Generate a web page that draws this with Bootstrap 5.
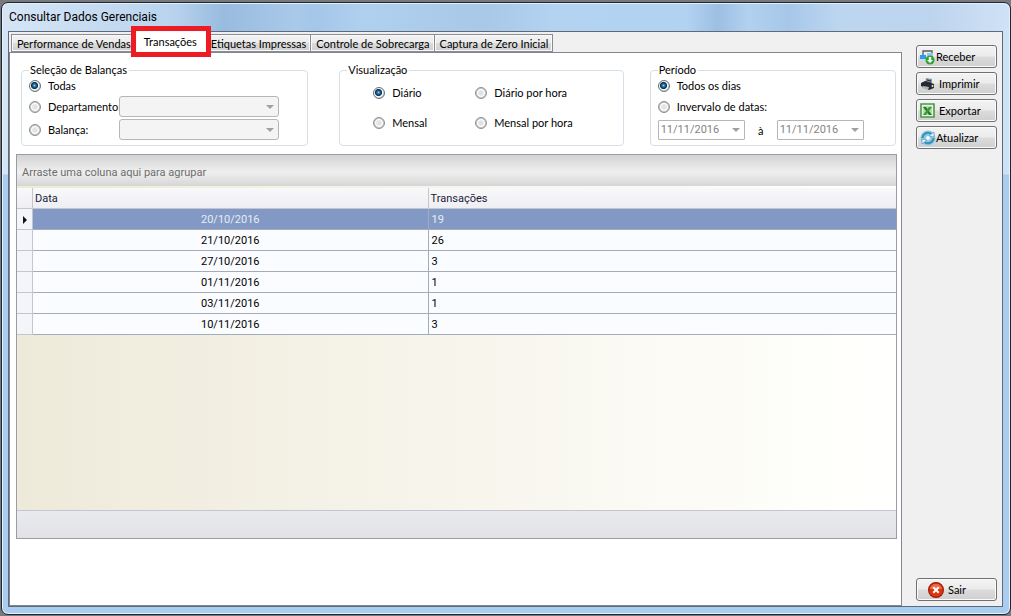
<!DOCTYPE html>
<html lang="pt-BR">
<head>
<meta charset="utf-8">
<meta name="viewport" content="width=device-width, initial-scale=1">
<title>Consultar Dados Gerenciais</title>
<link href="https://cdn.jsdelivr.net/npm/bootstrap@5.3.0/dist/css/bootstrap.min.css" rel="stylesheet">
<style>
body{font:11px/14px Lato,"Liberation Sans",sans-serif;color:#000;background:#77797c;padding:2px 0 1px 1px}
.win{border:1px solid #1d2732;border-radius:7px;padding:0 7px 7px 6px;
 background:linear-gradient(transparent 171px,#a9cdf0 172px),linear-gradient(90deg,#d5e5f6 0,#b9d3ee 17%,#98bbdf 22%,#a9c9e9 29%,#a4c6e8 31%,#b0d0ef 36%,#a9c8e8 48%,#b3d3f1 55%,#b1d2f1 68%,#9dbfe2 71%,#b2d1ef 74%,#a7c7e9 78%,#bdd6f0 83%,#bdd4ee 92%,#cfe2f6 100%);
 box-shadow:inset 0 0 0 1px #e4f1fc}
.caption{font:12px/16px Roboto,"Liberation Sans",sans-serif;height:28px;padding:6px 1px 0}
.client{border:1px solid #5d6a7c;background:#f0f0f0;min-height:0}
.tabs{padding:2px 0 0 2px;height:20px;border:0}
.tabs .nav-link{height:18px;padding:2px 4px 0 5px;border:1px solid #898c95;margin-right:-1px;border-radius:0;color:#000;white-space:nowrap;
 background:linear-gradient(#f3f3f3 0,#ebebeb 50%,#dcdcdc 51%,#d0d0d0 100%);box-shadow:inset 0 0 0 1px #fafafa;line-height:14px}
.tabs .nav-link.active{position:relative;z-index:2;height:31px;margin:-8px -6px 0 -4px;padding:4px 9px 0 8px;border:5px solid #ed1c24;background:#fff;color:#000}
.sheet{border:1px solid #828790;background:#fff;min-height:0;padding:10px 4px 66px 6px}
.groups{padding:0 1px 0 5px}
.box{flex:1 1 0;min-width:0;border:1px solid #d5dfe5;border-radius:4px;padding:0 4px 4px 7px}
.box legend{float:none;width:auto;margin:0;padding:0 2px 0 1px;font-size:11px;line-height:14px}
.box-a{flex-grow:288}.box-b{flex-grow:285;margin-left:31px}.box-c{flex-grow:245;margin-left:26px}
.line{height:23px}
legend + .line{height:18px}
.line label{white-space:nowrap}
.box label{padding-left:7px}
input[type=radio]{appearance:none;width:12px;height:12px;margin:0;flex:none;border:1px solid #8e8f8f;border-radius:50%;
 background:radial-gradient(circle,#dcdfe2 0,#e6e8ea 35%,#fff 50%,#c7c9cb 62%)}
input[type=radio]:checked{border-color:#64707c;background:radial-gradient(circle at 45% 45%,#7fd3f5 0,#1d6c9c 20%,#0e2f4c 40%,#fff 52%,#c4ccd4 70%)}
.combo{appearance:none;height:21px;border:1px solid #b4b6b8;border-radius:3px;color:#838383;opacity:1;padding:0 2px;
 background:#f4f4f4 url("data:image/svg+xml,%3Csvg xmlns='http://www.w3.org/2000/svg' width='8' height='4'%3E%3Cpath d='M0 0h8L4 4z' fill='%23a0a0a0'/%3E%3C/svg%3E") no-repeat right 4px center}
.combo.dt{width:87px;height:20px;background-color:#fff;border-radius:1px;font:11px/16px Roboto,sans-serif}
.cap{width:78px}
.amid{width:32px;padding-top:3px}
.views{display:grid;grid-template-columns:102px 1fr;row-gap:16px;padding:9px 0 0 26px}
.datagrid{border:1px solid #9a9aa8;margin-top:8px;min-height:0;font-family:Roboto,"Liberation Sans",sans-serif;
 background:linear-gradient(90deg,#eeeada,#fffffc 95%,#fff)}
.drop{height:31px;padding:11px 5px 0;color:#6d6d6d;background:linear-gradient(#d3d3d3,#efefef 55%,#d6d6d6)}
.sheet table{width:100%;margin-top:2px;table-layout:fixed;border-collapse:separate;border-spacing:0}
.sheet th{height:21px;font-weight:400;padding:2px 3px 0 2px;color:#1c1c38;background:linear-gradient(#f9f9fa,#eeeff3);border-right:1px solid #c5c5d1;border-bottom:1px solid #c5c5d1}
.sheet td{height:21px;padding:2px 3px 0;background:#fafcff;border-right:1px solid #a3adb8;border-bottom:1px solid #a3adb8}
.sheet th:last-child,.sheet td:last-child{border-right:0}
.sheet tbody th{background:#f4f5f8}
.sheet .sel td{background:#8199c4;color:#e8ecf4}
.sheet td:nth-child(2){text-align:center}
.foot{height:28px;border-top:1px solid #c5c5d1;background:linear-gradient(#e9eaee,#e1e1e6)}
.side{width:100px;padding:13px 5px 5px 14px}
.side .act{height:23px;padding:0 0 0 3px;border:1px solid #707070;border-radius:3px;color:#000;font-size:11px;line-height:14px;
 background:linear-gradient(#f3f3f3 0,#ebebeb 49%,#dcdcdc 51%,#cfcfcf 100%);box-shadow:inset 0 0 0 1px #fbfbfb}
.stack{gap:4px}
</style>
</head>
<body class="vh-100">
<div class="win d-flex flex-column h-100">
 <header class="caption">Consultar Dados Gerenciais</header>
 <div class="client d-flex flex-fill">
  <main class="d-flex flex-column flex-fill">
   <nav class="nav tabs flex-nowrap">
    <a class="nav-link" href="#">Performance de Vendas</a>
    <a class="nav-link active" href="#" aria-current="page">Transações</a>
    <a class="nav-link" href="#">Etiquetas Impressas</a>
    <a class="nav-link" href="#">Controle de Sobrecarga</a>
    <a class="nav-link" href="#">Captura de Zero Inicial</a>
   </nav>
   <section class="sheet d-flex flex-column flex-fill">
    <div class="groups d-flex">
     <fieldset class="box box-a">
      <legend>Seleção de Balanças</legend>
      <div class="line d-flex align-items-center"><input type="radio" name="bal" id="b1" checked><label for="b1">Todas</label></div>
      <div class="line d-flex align-items-center"><input type="radio" name="bal" id="b2"><label class="cap" for="b2">Departamento:</label><select class="combo flex-fill me-4" aria-label="Departamento" disabled></select></div>
      <div class="line d-flex align-items-center"><input type="radio" name="bal" id="b3"><label class="cap" for="b3">Balança:</label><select class="combo flex-fill me-4" aria-label="Balança" disabled></select></div>
     </fieldset>
     <fieldset class="box box-b">
      <legend>Visualização</legend>
      <div class="views">
       <div class="d-flex align-items-center"><input type="radio" name="vis" id="v1" checked><label for="v1">Diário</label></div>
       <div class="d-flex align-items-center"><input type="radio" name="vis" id="v2"><label for="v2">Diário por hora</label></div>
       <div class="d-flex align-items-center"><input type="radio" name="vis" id="v3"><label for="v3">Mensal</label></div>
       <div class="d-flex align-items-center"><input type="radio" name="vis" id="v4"><label for="v4">Mensal por hora</label></div>
      </div>
     </fieldset>
     <fieldset class="box box-c">
      <legend>Período</legend>
      <div class="line d-flex align-items-center"><input type="radio" name="per" id="p1" checked><label for="p1">Todos os dias</label></div>
      <div class="line d-flex align-items-center"><input type="radio" name="per" id="p2"><label for="p2">Invervalo de datas:</label></div>
      <div class="line d-flex align-items-center"><select class="combo dt" aria-label="Data inicial" disabled><option>11/11/2016</option></select><span class="amid text-center">à</span><select class="combo dt" aria-label="Data final" disabled><option>11/11/2016</option></select></div>
     </fieldset>
    </div>
    <div class="datagrid d-flex flex-column flex-fill">
     <div class="drop">Arraste uma coluna aqui para agrupar</div>
     <table>
      <colgroup><col style="width:16px"><col style="width:45%"><col></colgroup>
      <thead><tr><th></th><th>Data</th><th>Transações</th></tr></thead>
      <tbody>
       <tr class="sel"><th><svg class="d-block ms-1" width="8" height="8"><path d="M0 0v8l4-4z" fill="#101020"/></svg></th><td>20/10/2016</td><td>19</td></tr>
       <tr><th></th><td>21/10/2016</td><td>26</td></tr>
       <tr><th></th><td>27/10/2016</td><td>3</td></tr>
       <tr><th></th><td>01/11/2016</td><td>1</td></tr>
       <tr><th></th><td>03/11/2016</td><td>1</td></tr>
       <tr><th></th><td>10/11/2016</td><td>3</td></tr>
      </tbody>
     </table>
     <div class="foot mt-auto"></div>
    </div>
   </section>
  </main>
  <aside class="side d-flex flex-column flex-shrink-0">
   <div class="stack d-flex flex-column">
    <button type="button" class="act d-flex align-items-center"><svg width="16" height="16" viewBox="0 0 16 16"><path d="M3 8V2h9v7M3 2h9" fill="none" stroke="#555b63" stroke-width="1.3"/><path d="M0 6h6v4H0z" fill="#2d9cf0"/><path d="M7 4h6v3H7z" fill="#8cc8f4"/><circle cx="10" cy="11" r="4.5" fill="#2fa52f"/><path d="M8.800 8h2.400v3H13l-3 3-3-3h1.800z" fill="#fff"/></svg>Receber</button>
    <button type="button" class="act d-flex align-items-center"><svg class="me-1" width="15" height="16" viewBox="0 0 15 16"><path d="M6 2l6 1v5H5z" fill="#8295a4"/><path d="M1 7l4-2 9 3v4l-5 2-8-4z" fill="#26292d"/><path d="M3 10l6 1-1 3-6-2z" fill="#aeb5bb"/><path d="M7 4l4 1M6 6l5 1" stroke="#26292d"/><circle cx="12.500" cy="10" r="1" fill="#e8e8e8"/></svg>Imprimir</button>
    <button type="button" class="act d-flex align-items-center"><svg class="me-1" width="15" height="15" viewBox="0 0 15 15"><path d="M1 1h13v13H1z" fill="#e9f3e3" stroke="#4b9a45" stroke-width="1.600"/><path d="M3 3h9v9H3z" fill="#b9dbaa"/><path d="M3 4h3l6 8H9z" fill="#237a2a"/><path d="M9 4h3l-6 8H3z" fill="#3a9a3c"/></svg>Exportar</button>
    <button type="button" class="act d-flex align-items-center"><svg width="16" height="16" viewBox="0 0 16 16"><circle cx="8" cy="8" r="7.500" fill="#8ccbe6"/><path d="M2.500 8A5.500 5.500 0 0 1 11.500 4M13.500 8A5.500 5.500 0 0 1 4.500 12" fill="none" stroke="#3e8fb8" stroke-width="2"/><path d="M9 6l5-4v5zM7 10l-5 4V9z" fill="#e8f6fc" stroke="#3e8fb8" stroke-width=".6"/><circle cx="8" cy="8" r="2" fill="#f4fbff"/></svg>Atualizar</button>
   </div>
   <button type="button" class="act d-flex align-items-center mt-auto"><svg class="ms-2 me-1" width="16" height="16" viewBox="0 0 16 16"><circle cx="8" cy="8" r="7.400" fill="#e03410" stroke="#9e1b0b" stroke-width="1.200"/><path d="M2 7a6 5 0 0 1 12 0z" fill="#ef6a48"/><path d="M5.300 5.300l5.400 5.400M10.700 5.300l-5.400 5.400" stroke="#fff" stroke-width="2"/></svg>Sair</button>
  </aside>
 </div>
</div>
<script src="https://cdn.jsdelivr.net/npm/bootstrap@5.3.0/dist/js/bootstrap.bundle.min.js"></script>
</body>
</html>
